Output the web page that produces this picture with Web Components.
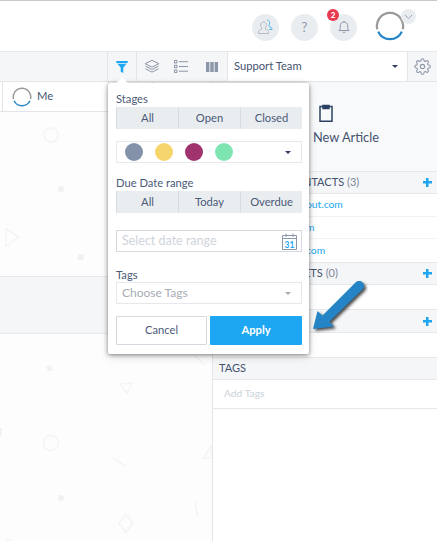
<!DOCTYPE html>
<html>
<head>
<meta charset="utf-8">
<title>Support board</title>
<style>
html, body {
  margin: 0;
  height: 100%;
  overflow: hidden;
  background: #fff;
  font-family: Lato, "Open Sans", sans-serif;
  color: #4a5a78;
}
</style>
</head>
<body>
<desk-app>
  <top-bar slot="top"></top-bar>
  <tool-bar slot="tools"></tool-bar>
  <task-board slot="board"></task-board>
  <side-panel slot="side">
    <side-section heading="NTACTS" count="(3)" add style="--inset:84px">
      <contact-row style="height:23px;--inset:87px">out.com</contact-row>
      <contact-row style="height:22px;--inset:87px">m</contact-row>
      <contact-row style="height:23px;--inset:87px;border-bottom:0">com</contact-row>
    </side-section>
    <side-section heading="ETS" count="(0)" add style="--inset:85px"><contact-row style="height:24px;border-bottom:0"></contact-row></side-section>
    <side-section add style="--title-height:24px"><contact-row style="height:24px;border-bottom:0"></contact-row></side-section>
    <side-section heading="TAGS"><contact-row muted></contact-row></side-section>
  </side-panel>
  <filter-popover slot="over"></filter-popover>
  <note-arrow slot="over"></note-arrow>
</desk-app>

<script>
// Small helper so each element only has to give its markup
class ShadowElement extends HTMLElement {
  constructor() {
    super();
    this.attachShadow({ mode: 'open' });
    this.shadowRoot.innerHTML = this.constructor.markup;
  }
}

class DeskApp extends ShadowElement {
  static markup = `
<style>
:host {
  display: flex;
  flex-direction: column;
  position: relative;
  height: 541px;
  box-sizing: border-box;
  border-top: 1px solid #c9c9c9;
  overflow: hidden;
}
.main {
  display: flex;
  flex: 1;
  min-height: 0;
}
</style>
<slot name="top"></slot>
<slot name="tools"></slot>
<div class="main">
  <slot name="board"></slot>
  <slot name="side"></slot>
</div>
<slot name="over"></slot>`;
}
customElements.define('desk-app', DeskApp);

class RingAvatar extends ShadowElement {
  static markup = `
<style>
:host {
  display: inline-block;
  flex: none;
  width: var(--ring-size, 30px);
  height: var(--ring-size, 30px);
}
svg {
  display: block;
  width: 100%;
  height: 100%;
}
</style>
<svg viewBox="0 0 32 32" fill="none" stroke-width="2.400">
  <path d="M2.440 19.500A14 14 0 1 1 29.560 19.500" stroke="#9a9a9a"/>
  <path d="M3.350 22A14 14 0 0 0 28.650 22" stroke="#2384c6"/>
</svg>`;
}
customElements.define('ring-avatar', RingAvatar);

class TopBar extends ShadowElement {
  static markup = `
<style>
:host {
  display: flex;
  justify-content: flex-end;
  align-items: center;
  gap: 12px;
  flex: none;
  height: 50px;
  padding-right: 32px;
  border-bottom: 1px solid #e6e8eb;
  background: #fff;
}
.round {
  position: relative;
  display: flex;
  align-items: center;
  justify-content: center;
  width: 27px;
  height: 27px;
  margin-top: 2px;
  border-radius: 50%;
  background: #e9edf0;
  color: #8b97a8;
  font-size: 13px;
}
.badge {
  position: absolute;
  left: -3px;
  top: -5px;
  width: 12px;
  height: 12px;
  border-radius: 50%;
  background: #e8394f;
  color: #fff;
  font-size: 8px;
  font-weight: 900;
  line-height: 12px;
  text-align: center;
}
.me {
  position: relative;
  display: flex;
  margin-left: 6px;
}
.chev {
  position: absolute;
  left: 26px;
  top: -2px;
  display: flex;
  align-items: center;
  justify-content: center;
  width: 15px;
  height: 15px;
  border-radius: 50%;
  background: #e9edf0;
}
</style>
<span class="round">
  <svg width="18" height="16" viewBox="0 0 18 16" fill="none" stroke="#b3bcc7" stroke-width="1">
    <path d="M1.500 14.500h10v-2c0-1-1.700-1.700-3.200-2.400V8.700c.8-.8 1-1.700 1-3 0-1.700-1-2.700-2.800-2.700S3.700 4 3.700 5.700c0 1.300.2 2.200 1 3v1.400c-1.500.7-3.200 1.400-3.200 2.400z"/>
    <path d="M10 1c1.600 0 2.700 1 2.700 2.800 0 1-.2 1.800-.8 2.400v1.100l3 1.700v1.500h-3" stroke="#5db8ee"/>
  </svg>
</span>
<span class="round">?</span>
<span class="round">
  <span class="badge">2</span>
  <svg width="12" height="14" viewBox="0 0 12 14" fill="none" stroke="#8b97a8" stroke-width="1">
    <path d="M1 10.500c1-1 1.300-2 1.300-4.500C2.300 3.700 3.800 2 6 2s3.700 1.700 3.700 4c0 2.500.3 3.500 1.300 4.500z"/>
    <path d="M4.800 12.300h2.400M6 1v1"/>
  </svg>
</span>
<span class="me">
  <ring-avatar></ring-avatar>
  <span class="chev">
    <svg width="9" height="6" viewBox="0 0 9 6" fill="none" stroke="#9aa5b3" stroke-width="1"><path d="M1 1l3.500 3.500L8 1"/></svg>
  </span>
</span>`;
}
customElements.define('top-bar', TopBar);

class ToolBar extends ShadowElement {
  static markup = `
<style>
:host {
  display: flex;
  flex: none;
  height: 29px;
  padding-left: 107px;
  border-bottom: 1px solid #e3e5e8;
  background: #f5f6f8;
}
.btn {
  display: flex;
  align-items: center;
  justify-content: center;
  flex: none;
  box-sizing: border-box;
  width: 29px;
}
.filter {
  border-left: 1px solid #e3e5e8;
  border-right: 1px solid #e3e5e8;
  width: 30px;
}
.team {
  display: flex;
  flex: 1;
  align-items: center;
  justify-content: space-between;
  padding: 0 9px 2px 6px;
  border-left: 1px solid #e3e5e8;
  border-right: 1px solid #e3e5e8;
  background: #fff;
  color: #44536f;
  font-size: 11.200px;
}
.caret {
  width: 0;
  height: 0;
  margin-top: 2px;
  border-left: 3px solid transparent;
  border-right: 3px solid transparent;
  border-top: 3px solid #2f3f5c;
}
</style>
<span class="btn filter">
  <svg width="12" height="12" viewBox="0 0 14 14"><path d="M0 0h14l-1 2.500H1z" fill="#1da7f2"/><path d="M2 3.500h10L8.500 8v6L5.500 12.500V8z" fill="#1da7f2"/></svg>
</span>
<span class="btn">
  <svg width="16" height="15" viewBox="0 0 16 14" fill="none" stroke="#8b97a8" stroke-width="1"><path d="M8 .8l7 3.400-7 3.400-7-3.400z"/><path d="M1.500 6.700L8 9.900l6.500-3.200M1.500 9.300L8 12.600l6.500-3.300"/></svg>
</span>
<span class="btn" style="width:30px">
  <svg width="14" height="13" viewBox="0 0 14 13" fill="none" stroke="#8b97a8" stroke-width="1"><path d="M.5.500h2.500V3H.5zM.5 5.200h2.500v2.500H.5zM.5 10h2.500v2.500H.5zM5 1.700h9M5 6.500h9M5 11.200h9"/></svg>
</span>
<span class="btn" style="width:31px">
  <svg width="12" height="10" viewBox="0 0 12 10" fill="#8b97a8"><path d="M0 0h3.400v10H0zM4.300 0h3.400v10H4.300zM8.600 0H12v10H8.600z"/></svg>
</span>
<span class="team">Support Team<span class="caret"></span></span>
<span class="btn">
  <svg width="17" height="17" viewBox="0 0 24 24" fill="none" stroke="#8b97a8" stroke-width="1.500"><circle cx="12" cy="12" r="3"/><path d="M19.400 15a1.650 1.650 0 0 0 .33 1.820l.06.06a2 2 0 0 1 0 2.830 2 2 0 0 1-2.830 0l-.06-.06a1.650 1.650 0 0 0-1.820-.33 1.650 1.650 0 0 0-1 1.510V21a2 2 0 0 1-2 2 2 2 0 0 1-2-2v-.09A1.650 1.650 0 0 0 9 19.400a1.650 1.650 0 0 0-1.820.33l-.06.06a2 2 0 0 1-2.830 0 2 2 0 0 1 0-2.830l.06-.06a1.650 1.650 0 0 0 .33-1.820 1.650 1.650 0 0 0-1.510-1H3a2 2 0 0 1-2-2 2 2 0 0 1 2-2h.09A1.650 1.650 0 0 0 4.600 9a1.650 1.650 0 0 0-.33-1.820l-.06-.06a2 2 0 0 1 0-2.830 2 2 0 0 1 2.830 0l.06.06a1.650 1.650 0 0 0 1.820.33H9a1.650 1.650 0 0 0 1-1.510V3a2 2 0 0 1 2-2 2 2 0 0 1 2 2v.09a1.650 1.650 0 0 0 1 1.510 1.650 1.650 0 0 0 1.820-.33l.06-.06a2 2 0 0 1 2.830 0 2 2 0 0 1 0 2.830l-.06.06a1.650 1.650 0 0 0-.33 1.820V9a1.650 1.650 0 0 0 1.510 1H21a2 2 0 0 1 2 2 2 2 0 0 1-2 2h-.09a1.650 1.650 0 0 0-1.510 1z"/></svg>
</span>`;
}
customElements.define('tool-bar', ToolBar);

class TaskBoard extends ShadowElement {
  static markup = `
<style>
:host {
  position: relative;
  display: flex;
  flex-direction: column;
  flex: none;
  width: 212px;
  border-right: 1px solid #e3e5e8;
  background: #fdfdfd;
}
svg.bg {
  position: absolute;
  left: 0;
  top: 0;
}
.head {
  position: relative;
  display: flex;
  flex: none;
  height: 29px;
  border-bottom: 1px solid #e3e5e8;
  background: #fff;
  font-size: 11.200px;
  color: #44536f;
}
.cell {
  display: flex;
  align-items: center;
  gap: 5px;
  box-sizing: border-box;
  border-left: 1px solid #e3e5e8;
}
.me { width: 106px; margin-left: 2px; padding-left: 9px; --ring-size: 20px; }
.me b { margin-bottom: 2px; font-weight: 400; }
.tick { width: 44px; }
.band {
  position: relative;
  flex: none;
  height: 56px;
  margin-top: 164px;
  border-top: 1px solid #e6e8eb;
  border-bottom: 1px solid #e6e8eb;
  background: #f5f6f8;
}
</style>
<svg class="bg" width="212" height="459" viewBox="0 82 212 459" fill="none" stroke="#f4f4f4" stroke-width="1.500">
  <circle cx="51" cy="135" r="7"/>
  <circle cx="61" cy="189" r="3" fill="#f1f1f1" stroke="none"/>
  <path d="M6 229l13 8-13 9z"/>
  <path d="M78.500 254l5.500 1-1 5.500-5.500-1z" fill="#f1f1f1" stroke="none"/>
  <path d="M46 366l5-.5 2 5-5 .5z" fill="#f1f1f1" stroke="none"/>
  <path d="M120 384l12-1-5 10z"/>
  <path d="M0 428h2l-.5 8H0z" fill="#f1f1f1" stroke="none"/>
  <circle cx="51" cy="443" r="7.500"/>
  <path d="M113 458l13 8.500M195 501.500l2.500 14.500M195 356l10 9M204 458l7-13v13z"/>
  <circle cx="61" cy="498" r="3" fill="#f1f1f1" stroke="none"/>
  <path d="M126 514l7 9-7 9.500-7-9.500zM6 539l6 2.500"/>
</svg>
<div class="head">
  <span class="cell me"><ring-avatar></ring-avatar><b>Me</b></span>
  <span class="cell tick"></span>
  <span class="cell tick"></span>
</div>
<div class="band"></div>`;
}
customElements.define('task-board', TaskBoard);

class SidePanel extends ShadowElement {
  static markup = `
<style>
:host {
  display: flex;
  flex-direction: column;
  flex: 1;
  min-width: 0;
  background: #fff;
}
.top {
  display: flex;
  flex-direction: column;
  align-items: flex-start;
  flex: none;
  box-sizing: border-box;
  height: 89px;
  padding: 22px 0 0 100px;
  background: #f8f9fb;
  color: #44536f;
  font-size: 12.800px;
}
.top svg { margin: 0 0 7px 6px; }
</style>
<div class="top">
  <svg width="14" height="18" viewBox="0 0 14 18" fill="none" stroke="#2d4163" stroke-width="1.500"><path d="M4 2.500H1v14.700h12V2.500h-3"/><path d="M4 1.500h6v3H4z" fill="#2d4163"/></svg>
  New Article
</div>
<slot></slot>`;
}
customElements.define('side-panel', SidePanel);

class SideSection extends ShadowElement {
  static markup = `
<style>
:host {
  display: block;
  flex: none;
}
.title {
  display: flex;
  align-items: center;
  justify-content: space-between;
  box-sizing: border-box;
  height: var(--title-height, 23px);
  padding: 0 5px 0 calc(6px + var(--inset, 0px));
  border-top: 1px solid #e6e8eb;
  border-bottom: 1px solid #e6e8eb;
  background: #f5f6f8;
  color: #44536f;
  font-size: 11px;
  white-space: nowrap;
}
.label { margin-bottom: 2px; }
.count { color: #7d8798; }
.plus {
  width: 9px;
  height: 9px;
  margin-left: auto;
  background:
    linear-gradient(#1da7f2, #1da7f2) center / 100% 2.500px no-repeat,
    linear-gradient(#1da7f2, #1da7f2) center / 2.500px 100% no-repeat;
}
</style>
<div class="title"><span class="label"><span class="name"></span> <span class="count"></span></span><span class="plus"></span></div>
<slot></slot>`;

  connectedCallback() {
    this.shadowRoot.querySelector('.name').textContent = this.getAttribute('heading') || '';
    this.shadowRoot.querySelector('.count').textContent = this.getAttribute('count') || '';
    if (!this.hasAttribute('add')) {
      this.shadowRoot.querySelector('.plus').remove();
    }
  }
}
customElements.define('side-section', SideSection);

class ContactRow extends ShadowElement {
  static markup = `
<style>
:host {
  display: flex;
  align-items: center;
  box-sizing: border-box;
  padding: 0 0 2px calc(6px + var(--inset, 0px));
  border-bottom: 1px solid #f0f1f3;
  color: #1da7f2;
  font-size: 10.300px;
  white-space: nowrap;
}
:host([muted]) {
  height: 29px;
  padding-left: 11px;
  border-bottom: 1px solid #e6e8eb;
  color: #ccd2da;
  font-size: 10.300px;
}
</style>
<slot></slot>`;

  connectedCallback() {
    if (this.hasAttribute('muted')) {
      this.textContent = 'Add Tags';
    }
  }
}
customElements.define('contact-row', ContactRow);

class SegGroup extends ShadowElement {
  static markup = `
<style>
:host {
  display: grid;
  grid-template-columns: 62px 62px 62px;
  height: 22px;
  font-size: 11.200px;
  color: #4a5a78;
}
.seg {
  display: flex;
  align-items: center;
  justify-content: center;
  padding-bottom: 2px;
  background: #e9edf0;
  border-left: 1px solid #d8dce1;
}
.seg:first-child {
  background: #e2e7eb;
  border-left: 0;
  box-shadow: inset 0 1px 2px rgba(80, 90, 110, .12);
}
</style>`;

  connectedCallback() {
    for (let label of this.getAttribute('items').split(',')) {
      const seg = document.createElement('span');
      seg.className = 'seg';
      seg.textContent = label;
      this.shadowRoot.appendChild(seg);
    }
  }
}
customElements.define('seg-group', SegGroup);

class FilterPopover extends ShadowElement {
  static markup = `
<style>
:host {
  position: absolute;
  left: 108px;
  top: 82px;
  display: flex;
  flex-direction: column;
  box-sizing: border-box;
  width: 201px;
  height: 271px;
  padding: 8px 7px 0 8px;
  border-radius: 2px;
  background: #fff;
  box-shadow: 0 1px 4px rgba(0, 0, 0, .45), 0 3px 10px rgba(0, 0, 0, .12);
  font-size: 11.200px;
  color: #4a5a78;
}
.tip {
  position: absolute;
  left: 10px;
  top: -4px;
  width: 8px;
  height: 8px;
  background: #fff;
  transform: rotate(45deg);
}
label {
  display: block;
  height: 16px;
  line-height: 16px;
}
.box {
  display: flex;
  align-items: center;
  box-sizing: border-box;
  height: 22px;
  border: 1px solid #e6e8ec;
}
.colors {
  gap: 12px;
  margin-top: 12px;
  padding: 0 10px 0 8px;
}
.colors i {
  flex: none;
  width: 18px;
  height: 18px;
  border-radius: 50%;
}
.caret {
  width: 0;
  height: 0;
  margin-left: auto;
  border-left: 3px solid transparent;
  border-right: 3px solid transparent;
  border-top: 3px solid #2f3f5c;
}
.due { margin-top: 12px; }
.date {
  justify-content: space-between;
  margin-top: 17px;
  padding: 0 4px 2px 5px;
  border-color: #d5d9df;
  color: #cfd4db;
  font-size: 12.500px;
}
.date svg { margin-top: 2px; }
.tags-label { margin-top: 15px; }
.tags {
  margin-top: -1px;
  padding: 0 10px 2px 5px;
  color: #a7acb3;
  font-size: 12px;
}
.tags .caret { border-top-color: #a7acb3; margin-top: 2px; }
.actions {
  display: grid;
  grid-template-columns: 91px 92px;
  gap: 3px;
  margin-top: 12px;
}
button {
  height: 29px;
  border-radius: 1px;
  font: inherit;
  padding: 0 0 2px;
}
.cancel {
  border: 1px solid #d5d9df;
  background: #fff;
  color: #4a5a78;
}
.apply {
  border: 0;
  background: #1da7f2;
  color: #fff;
  font-weight: 700;
}
</style>
<span class="tip"></span>
<label>Stages</label>
<seg-group items="All,Open,Closed"></seg-group>
<div class="box colors">
  <i style="background:#8492a9"></i>
  <i style="background:#f6d66c"></i>
  <i style="background:#a0326e"></i>
  <i style="background:#7fe5b0"></i>
  <span class="caret"></span>
</div>
<label class="due">Due Date range</label>
<seg-group items="All,Today,Overdue"></seg-group>
<div class="box date">Select date range
  <svg width="15" height="17" viewBox="0 0 15 17" fill="none" stroke="#8b97a8">
    <path d="M.5 2.500h14v14H.5zM.500 5.500h14M4 .5v3.500M11 .5v3.500"/>
    <text x="7.500" y="14.500" font-family="Lato, sans-serif" font-size="8.500" font-weight="700" text-anchor="middle" fill="#1da7f2" stroke="none">31</text>
  </svg>
</div>
<label class="tags-label">Tags</label>
<div class="box tags">Choose Tags<span class="caret"></span></div>
<div class="actions">
  <button class="cancel">Cancel</button>
  <button class="apply">Apply</button>
</div>`;
}
customElements.define('filter-popover', FilterPopover);

// The blue arrow someone drew on top of the screenshot
class NoteArrow extends ShadowElement {
  static markup = `
<style>
:host {
  position: absolute;
  left: 308px;
  top: 275px;
  width: 62px;
  height: 60px;
}
svg {
  display: block;
  overflow: visible;
  filter: drop-shadow(2px 2px 1.500px rgba(0, 0, 0, .7));
}
</style>
<svg width="62" height="60" viewBox="308 276 62 60">
  <path d="M313 329L317.500 311l5 4.500L356 282A5 5 0 0 1 363 289L329.500 321.500l4.500 5z" fill="#2484c6"/>
</svg>`;
}
customElements.define('note-arrow', NoteArrow);
</script>
</body>
</html>
